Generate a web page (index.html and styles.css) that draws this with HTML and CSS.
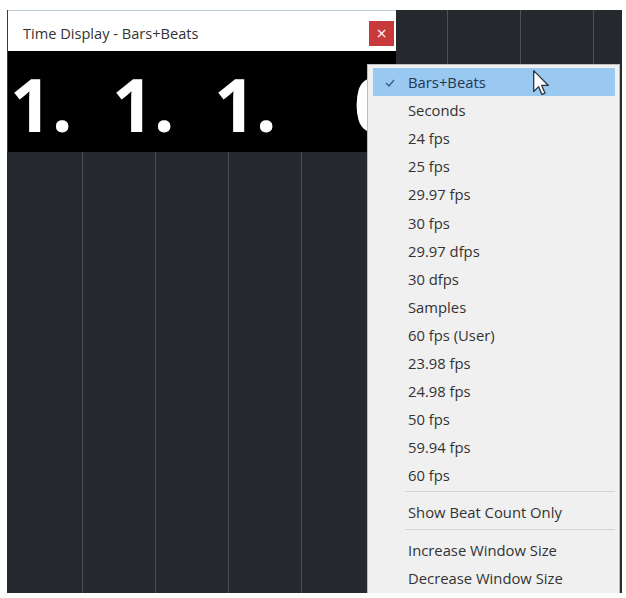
FILE: index.html
```html
<!DOCTYPE html>
<html lang="en">
<head>
<meta charset="utf-8">
<title>Time Display - Bars+Beats</title>
<link rel="stylesheet" href="styles.css">
</head>
<body>
<div class="desk">
  <div class="window">
    <div class="titlebar">
      <span class="title">Time Display - Bars+Beats</span>
      <span class="close">&#215;</span>
    </div>
    <div class="display">
      <span class="seg">1.</span>
      <span class="seg">1.</span>
      <span class="seg">1.</span>
      <span class="seg ticks">0</span>
    </div>
  </div>

  <ul class="menu">
    <li class="item active">
      <svg class="check" width="10" height="8" viewBox="0 0 10 8"><polyline points="1,4 4,7 9,1" fill="none" stroke="#3b5f86" stroke-width="1.4"/></svg>
      <span>Bars+Beats</span>
      <svg class="cursor" width="17" height="26" viewBox="0 0 13 20"><path d="M0.5,0.5 L0.5,16.5 L4.3,12.8 L6.8,18.8 L9.2,17.8 L6.7,11.9 L11.8,11.9 Z" fill="#fff" stroke="#2a3440" stroke-width="1" stroke-linejoin="round"/></svg>
    </li>
    <li class="item"><span>Seconds</span></li>
    <li class="item"><span>24 fps</span></li>
    <li class="item"><span>25 fps</span></li>
    <li class="item"><span>29.97 fps</span></li>
    <li class="item"><span>30 fps</span></li>
    <li class="item"><span>29.97 dfps</span></li>
    <li class="item"><span>30 dfps</span></li>
    <li class="item"><span>Samples</span></li>
    <li class="item"><span>60 fps (User)</span></li>
    <li class="item"><span>23.98 fps</span></li>
    <li class="item"><span>24.98 fps</span></li>
    <li class="item"><span>50 fps</span></li>
    <li class="item"><span>59.94 fps</span></li>
    <li class="item"><span>60 fps</span></li>
    <li class="sep"></li>
    <li class="item"><span>Show Beat Count Only</span></li>
    <li class="sep"></li>
    <li class="item"><span>Increase Window Size</span></li>
    <li class="item"><span>Decrease Window Size</span></li>
  </ul>
</div>
</body>
</html>
```
FILE: styles.css
```css
html, body {
  margin: 0;
  padding: 0;
  background: #ffffff;
}

body {
  font-family: "Open Sans", "Noto Sans", sans-serif;
}

.desk {
  position: relative;
  margin: 10px 0 0 7px;
  width: 615px;
  height: 583px;
  background-color: #26292d;
  background-image: repeating-linear-gradient(to right, #26292d 0, #26292d 72px, #4d5054 72px, #4d5054 73px);
  background-position: 3px 0;
}

.window {
  width: 389px;
  display: flex;
  flex-direction: column;
  border-left: 1px solid #3a3d40;
  box-sizing: border-box;
}

.titlebar {
  height: 41px;
  box-sizing: border-box;
  background: #ffffff;
  border-top: 1px solid #b9cdd6;
  display: flex;
  align-items: center;
  justify-content: space-between;
  padding: 3px 2px 0 15px;
}

.title {
  font-size: 14.6px;
  color: #333333;
}

.close {
  width: 25px;
  height: 25px;
  margin-top: 2px;
  background: #c8393b;
  color: #ffffff;
  font-size: 14px;
  line-height: 24px;
  text-align: center;
  font-family: "DejaVu Sans", sans-serif;
}

.display {
  height: 101px;
  background: #000000;
  display: flex;
  align-items: flex-start;
  padding-left: 2px;
  color: #ffffff;
  font-weight: 700;
  font-size: 73px;
  line-height: 86px;
}

.seg {
  width: 102px;
  flex: none;
  padding-top: 10px;
}

.ticks {
  width: 40px;
  margin-left: 38px;
  overflow: visible;
}

.menu {
  position: absolute;
  left: 360px;
  top: 54px;
  width: 253px;
  bottom: 0;
  margin: 0;
  padding: 3px 4px 0 5px;
  list-style: none;
  box-sizing: border-box;
  background: #f0f0f0;
  border: 1px solid #bdbdbd;
  border-bottom: none;
  font-size: 14.8px;
  color: #333333;
}

.item {
  position: relative;
  height: 28.1px;
  display: flex;
  align-items: center;
  padding-left: 35px;
}

.item.active {
  background: #99c8f1;
  color: #24374f;
}

.check {
  position: absolute;
  left: 12px;
  top: 11px;
}

.cursor {
  position: absolute;
  left: 160px;
  top: 2px;
}

.sep {
  height: 9px;
  box-sizing: border-box;
  margin-left: 32px;
  border-top: 1px solid #d6d6d6;
  position: relative;
  top: 2px;
}
```
